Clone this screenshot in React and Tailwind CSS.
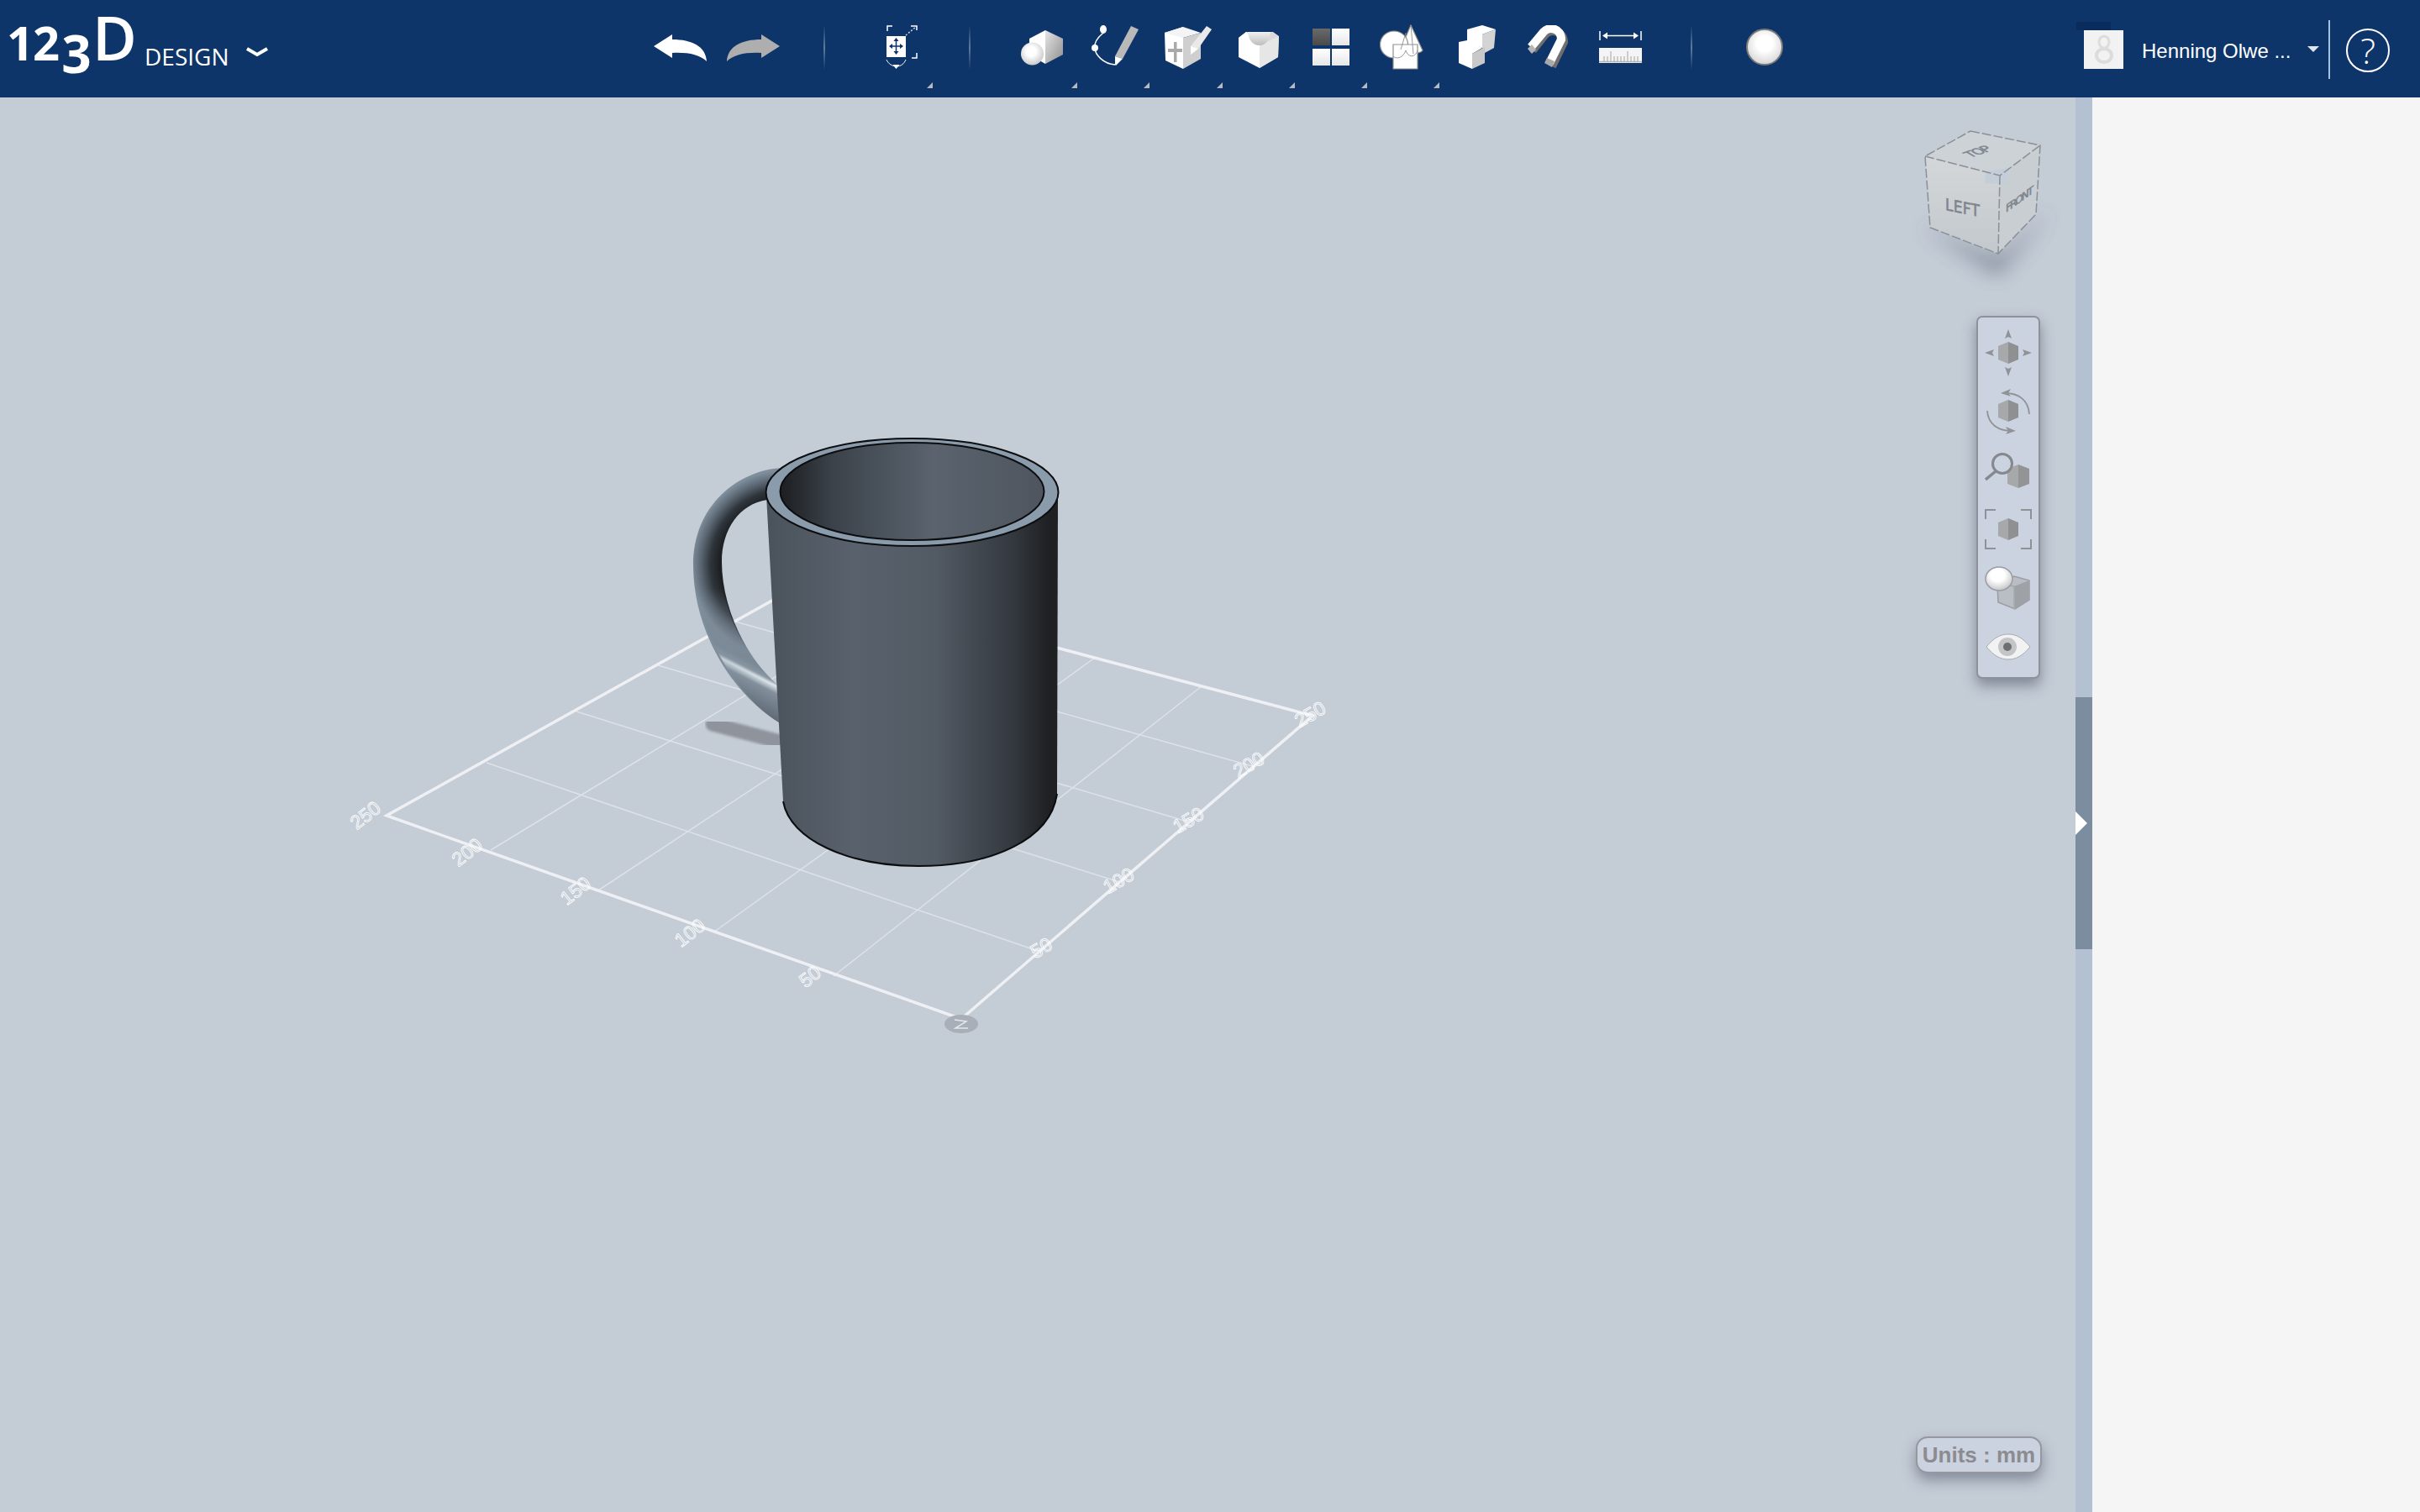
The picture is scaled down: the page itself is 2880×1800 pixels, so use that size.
import { useId } from 'react';

const OPEN = "font-['Open_Sans',sans-serif]";
const ARIAL = "font-['Liberation_Sans',Arial,sans-serif]";

// --- top bar icons ---

function Arrow({ fill, flip }) {
  return (
    <svg width="63" height="32" viewBox="0 0 63 32" className={flip ? '-scale-x-100' : ''}>
      <path d="M0 14 L22 0 V6 C45 6 62 14 63 32 C55 24 40 21 22 22 V28 Z" fill={fill} />
    </svg>
  );
}

function FitIcon() {
  return (
    <svg width="38" height="52" viewBox="0 0 38 52" fill="none">
      <path d="M2 7V1H8M30 1H37V6M37 33V39H31" stroke="#fff" strokeWidth="1.5" />
      <path d="M24 12L36 2" stroke="#cfd6e0" strokeWidth="1.5" strokeDasharray="2 2" />
      <rect x="1" y="13" width="23" height="25" fill="#fff" />
      <path d="M12.500 16v16M5 25h15" stroke="#0e3569" strokeWidth="1.500" />
      <path d="M12.500 15l-3 4h6zM12.500 35l-3-4h6zM4 25l4-3v6zM21 25l-4-3v6z" fill="#0e3569" />
      <path d="M1 41c2 5 7 8 12 8s9-3 11-8" stroke="#fff" strokeWidth="1" />
      <path d="M12.500 52l-4-5h8z" fill="#fff" />
    </svg>
  );
}

function PrimitiveIcon({ id }) {
  return (
    <svg width="50" height="42" viewBox="0 0 50 42">
      <defs>
        <linearGradient id={`${id}a`} x1="0" y1="0" x2="1" y2="1">
          <stop offset="0" stopColor="#e6e6e6" />
          <stop offset="1" stopColor="#8e8e8e" />
        </linearGradient>
        <radialGradient id={`${id}b`} cx="0.45" cy="0.4" r="0.7">
          <stop offset="0.3" stopColor="#fff" />
          <stop offset="1" stopColor="#bdbdbd" />
        </radialGradient>
      </defs>
      <path d="M29 0L10 10V29L29 40Z" fill="#fff" />
      <path d="M29 0L50 10V29L29 40Z" fill={`url(#${id}a)`} />
      <ellipse cx="13.500" cy="28" rx="13.500" ry="13.500" fill={`url(#${id}b)`} />
    </svg>
  );
}

function SketchIcon() {
  return (
    <svg width="58" height="49" viewBox="0 0 58 49" fill="none">
      <path d="M15 9C8 15 4 22 5 27C5 35 15 46 29 47" stroke="#fff" strokeWidth="1.500" />
      <ellipse cx="15" cy="5" rx="4" ry="5" fill="#fff" />
      <ellipse cx="5" cy="27" rx="4" ry="4" fill="#fff" />
      <path d="M29 37L48 1L57 5L38 40Z" fill="#b9b9b9" />
      <path d="M29 37L38 40L30 48L29 47Z" fill="#fff" />
    </svg>
  );
}

function ConstructIcon() {
  return (
    <svg width="56" height="53" viewBox="0 0 56 53">
      <path d="M22 2L0 9L1 42L22 52Z" fill="#fff" />
      <path d="M22 2L43 9L22 15L0 9Z" fill="#f4f4f4" />
      <path d="M22 15L43 9V40L22 52Z" fill="#cfcfcf" />
      <path d="M11 20h3.500v24H11zM4 28h17v4H4z" fill="#a9a9a9" />
      <path d="M31 25L50 1L56 5L40 28L31 35Z" fill="#e9e9e9" />
      <path d="M31 25L40 28L31 35Z" fill="#fff" />
    </svg>
  );
}

function ModifyIcon({ id }) {
  return (
    <svg width="49" height="43" viewBox="0 0 49 43">
      <defs>
        <linearGradient id={`${id}a`} x1="0" y1="0" x2="0" y2="1">
          <stop offset="0" stopColor="#f1f1f1" />
          <stop offset="1" stopColor="#bdbdbd" />
        </linearGradient>
      </defs>
      <path d="M10 0H42L49 5L48 30L26 43V16L1 7Z" fill="#dadada" />
      <path d="M1 7L10 0L26 16V43L1 30Z" fill="#fff" />
      <path d="M26 16V43L48 30L49 5Z" fill="#e6e6e6" />
      <path d="M12 0H39C38 10 33 16 26 16C18 16 13 10 12 0Z" fill={`url(#${id}a)`} />
    </svg>
  );
}

function PatternIcon() {
  return (
    <div className="grid grid-cols-[21px_21px] grid-rows-[20px_20px] gap-x-[2px] gap-y-[4px]">
      <div className="bg-gradient-to-b from-[#6a6a6a] to-[#4a4a4a]" />
      <div className="bg-gradient-to-b from-white to-[#e6e6e6]" />
      <div className="bg-gradient-to-b from-white to-[#e6e6e6]" />
      <div className="bg-gradient-to-b from-white to-[#e6e6e6]" />
    </div>
  );
}

function GroupIcon() {
  return (
    <svg width="52" height="54" viewBox="0 0 52 54" fill="#fff" stroke="#8f8f8f" strokeWidth="1.200">
      <path d="M37 1L24 31C26 36 48 36 51 31Z" />
      <ellipse cx="17" cy="24" rx="16.500" ry="16" />
      <path d="M16 24H45V53H16Z" />
      <path d="M16 38C20 42 28 40 31 31C34 40 42 40 45 31M31 10L25 30M37 1L40 35" fill="none" strokeWidth="0.900" />
    </svg>
  );
}

function CombineIcon() {
  return (
    <svg width="45" height="52" viewBox="0 0 45 52">
      <path d="M11 18V5L29 0L45 5L29 11V27L11 20Z" fill="#fff" />
      <path d="M29 11L45 5L43 27L32 33L29 27Z" fill="#d4d4d4" />
      <path d="M1 20L11 18L29 27L17 34V52L1 45Z" fill="#fff" />
      <path d="M17 34L32 26V45L17 52Z" fill="#c9c9c9" />
    </svg>
  );
}

function MagnetIcon() {
  return (
    <svg width="52" height="54" viewBox="0 0 52 54" fill="none" strokeLinejoin="miter">
      <path d="M7 30L22 11C28 4 44 6 44 20L30 49" stroke="#6f6f6f" strokeWidth="10" />
      <path d="M5 26L20 8C26 1 41 3 41 17L27 45" stroke="#fff" strokeWidth="10" />
      <path d="M6 23L1 28L6 34L11 29Z" fill="#b5b5b5" />
      <path d="M24 39L21 45L30 50L33 43Z" fill="#a9a9a9" />
    </svg>
  );
}

function MeasureIcon() {
  const ticks = [6, 10, 14, 18, 22, 26, 30, 34, 38, 42, 46];
  return (
    <svg width="51" height="38" viewBox="0 0 51 38">
      <path d="M1 0V11M50 0V11M6 5.500H45" stroke="#fff" strokeWidth="1.500" />
      <path d="M4 5.500L10 1.500V9.500ZM47 5.500L41 1.500V9.500Z" fill="#fff" />
      <rect x="0" y="20" width="51" height="18" fill="#f4f4f4" />
      <path d="M0 36.500H51" stroke="#b5b5b5" strokeWidth="1.500" />
      {ticks.map((x, i) => (
        <path key={x} d={`M${x} ${i % 5 === 2 ? 24 : 30}V36`} stroke="#a3a3a3" strokeWidth="1" />
      ))}
    </svg>
  );
}

function Caret({ className }) {
  return (
    <svg width="7" height="7" viewBox="0 0 7 7" className={`absolute top-[98px] ${className}`}>
      <path d="M7 0V7H0Z" fill="#b7bac0" />
    </svg>
  );
}

function Sep({ className }) {
  return <div className={`mt-[30px] h-[53px] w-[2px] shrink-0 bg-gradient-to-b from-transparent via-[#5f7c9c] to-transparent ${className}`} />;
}

// --- view tools on the right ---

function Hex({ x, y, s = 1 }) {
  return (
    <g transform={`translate(${x} ${y}) scale(${s})`}>
      <path d="M0-13L-12-8V8L0 13Z" fill="#a6a8aa" />
      <path d="M0-13L12-8V8L0 13Z" fill="#8e9092" />
    </g>
  );
}

function NavPan() {
  return (
    <svg width="56" height="58" viewBox="-28 -29 56 58" fill="#8f9296">
      <Hex x={0} y={0} />
      <path d="M0-28L-4-17L0-19L4-17ZM0 28L-4 17L0 19L4 17ZM-28 0L-17-4L-19 0L-17 4ZM28 0L17-4L19 0L17 4Z" />
    </svg>
  );
}

function NavOrbit() {
  return (
    <svg width="56" height="56" viewBox="-28 -28 56 56" fill="none">
      <Hex x={0} y={-1} />
      <path d="M25 3C24-14 12-22-4-22" stroke="#8f9296" strokeWidth="1.800" />
      <path d="M-25-1C-24 15-12 23 4 23" stroke="#8f9296" strokeWidth="1.800" />
      <path d="M-9-22L3-27L0-22L3-18ZM9 23L-3 18L0 23L-3 27Z" fill="#8f9296" />
    </svg>
  );
}

function NavZoom() {
  return (
    <svg width="56" height="44" viewBox="0 0 56 44" fill="none">
      <g transform="translate(40 29)">
        <path d="M0-14L-13-9V9L0 14Z" fill="#a6a8aa" />
        <path d="M0-14L13-9V9L0 14Z" fill="#929496" />
      </g>
      <circle cx="21" cy="14" r="11.500" fill="#cbd3e0" stroke="#85888c" strokeWidth="3" />
      <path d="M13 23L1 33" stroke="#85888c" strokeWidth="3.500" />
    </svg>
  );
}

function NavFit() {
  return (
    <svg width="56" height="48" viewBox="-28 -24 56 48" fill="none">
      <Hex x={0} y={0} s={1} />
      <path d="M-27-12V-23H-15M15-23H27V-12M27 12V23H15M-15 23H-27V12" stroke="#8f9296" strokeWidth="2" />
    </svg>
  );
}

function NavStyle({ id }) {
  return (
    <svg width="56" height="52" viewBox="0 0 56 52">
      <defs>
        <radialGradient id={`${id}s`} cx="0.45" cy="0.35" r="0.75">
          <stop offset="0.35" stopColor="#fff" />
          <stop offset="1" stopColor="#b4b6b9" />
        </radialGradient>
      </defs>
      <path d="M15 21L35 12L53 17V40L36 51L16 43Z" fill="#b9bec4" stroke="#9a9da1" strokeWidth="1.500" />
      <path d="M35 24L53 17V40L36 51Z" fill="#9ea2a6" />
      <path d="M15 21L35 24V51" fill="none" stroke="#a5a8ac" strokeWidth="1.500" />
      <ellipse cx="17" cy="15" rx="16" ry="14" fill={`url(#${id}s)`} stroke="#9a9da1" strokeWidth="1.500" />
    </svg>
  );
}

function NavEye() {
  return (
    <svg width="54" height="32" viewBox="0 0 54 32">
      <path d="M1 16C10 5 18 1 27 1C36 1 44 5 53 16C44 27 36 31 27 31C18 31 10 27 1 16Z" fill="#f2f2f2" stroke="#a9abae" strokeWidth="1" />
      <circle cx="26" cy="16" r="11" fill="#c4c5c7" />
      <circle cx="26" cy="16" r="5" fill="#6e6f71" />
    </svg>
  );
}

// --- the 3D scene, drawn in screen coordinates of the full page ---

const LB = [[460, 971], [584, 1012], [712, 1060], [849, 1110], [992, 1162], [1144, 1213]];
const TR = [[960, 692], [1064, 720], [1181, 751], [1303, 783], [1430, 817], [1562, 852]];
const LT = [[460, 971], [579, 908], [686, 847], [783, 792], [875, 740], [960, 692]];
const BR = [[1144, 1213], [1238, 1133], [1332, 1050], [1413, 978], [1490, 912], [1562, 852]];

const AXIS_LABELS = [
  ['250', 436, 972, -38], ['200', 557, 1016, -38], ['150', 686, 1062, -38], ['100', 822, 1112, -38], ['50', 965, 1164, -38],
  ['50', 1240, 1130, -30], ['100', 1332, 1050, -30], ['150', 1415, 978, -30], ['200', 1487, 912, -30], ['250', 1560, 852, -30],
];

function Grid() {
  return (
    <g>
      {LB.slice(1, 5).map((p, i) => (
        <line key={`a${i}`} x1={p[0]} y1={p[1]} x2={TR[i + 1][0]} y2={TR[i + 1][1]} stroke="#dde2e8" strokeWidth="1.500" />
      ))}
      {LT.slice(1, 5).map((p, i) => (
        <line key={`b${i}`} x1={p[0]} y1={p[1]} x2={BR[i + 1][0]} y2={BR[i + 1][1]} stroke="#dde2e8" strokeWidth="1.500" />
      ))}
      <path d="M960 692L460 971L1144 1213L1562 852Z" fill="none" stroke="#eef0f3" strokeWidth="3.500" />
      {AXIS_LABELS.map(([t, x, y, r], i) => (
        <text
          key={i}
          transform={`translate(${x} ${y}) rotate(${r})`}
          textAnchor="middle"
          dominantBaseline="middle"
          fontFamily="Liberation Sans, sans-serif"
          fontSize="23"
          fill="none"
          stroke="#fff"
          strokeWidth="0.800"
        >
          {t}
        </text>
      ))}
      <ellipse cx="1144" cy="1219" rx="20" ry="11" fill="#a9afb8" />
      <path d="M1136 1214L1150 1216L1137 1224L1152 1224" fill="none" stroke="#e4e7ea" strokeWidth="1.500" />
    </g>
  );
}

function Mug() {
  return (
    <g>
      <defs>
        <linearGradient id="body" gradientUnits="userSpaceOnUse" x1="912" y1="0" x2="1259" y2="0">
          <stop offset="0" stopColor="#4a525c" />
          <stop offset="0.3" stopColor="#59626c" />
          <stop offset="0.58" stopColor="#525a64" />
          <stop offset="0.85" stopColor="#33383e" />
          <stop offset="0.97" stopColor="#1e2022" />
          <stop offset="1" stopColor="#1e2022" />
        </linearGradient>
        <linearGradient id="inner" gradientUnits="userSpaceOnUse" x1="928" y1="0" x2="1243" y2="0">
          <stop offset="0" stopColor="#1c1e20" />
          <stop offset="0.2" stopColor="#3b424a" />
          <stop offset="0.58" stopColor="#5a636e" />
          <stop offset="1" stopColor="#4e555e" />
        </linearGradient>
        <radialGradient id="handle" gradientUnits="userSpaceOnUse" cx="935" cy="672" r="112">
          <stop offset="0.7" stopColor="#1c2024" />
          <stop offset="0.8" stopColor="#2f353b" />
          <stop offset="0.9" stopColor="#596571" />
          <stop offset="1" stopColor="#7f8e9c" />
        </radialGradient>
        <linearGradient id="handleLow" gradientUnits="userSpaceOnUse" x1="865" y1="830" x2="888" y2="785">
          <stop offset="0" stopColor="#5d6873" />
          <stop offset="0.6" stopColor="#83909c" />
          <stop offset="0.76" stopColor="#dfe7ee" />
          <stop offset="0.84" stopColor="#8a97a3" />
          <stop offset="1" stopColor="#7a8793" />
        </linearGradient>
        <linearGradient id="lowFade" gradientUnits="userSpaceOnUse" x1="0" y1="700" x2="0" y2="815">
          <stop offset="0" stopColor="#000" />
          <stop offset="1" stopColor="#fff" />
        </linearGradient>
        <mask id="lowMask" maskUnits="userSpaceOnUse" x="800" y="680" width="160" height="200">
          <rect x="800" y="680" width="160" height="200" fill="url(#lowFade)" />
        </mask>
        <filter id="soft"><feGaussianBlur stdDeviation="1.500" /></filter>
      </defs>

      <path d="M848 862L932 884" stroke="#8e939c" strokeWidth="17" strokeLinecap="round" filter="url(#soft)" />

      <path d="M930 557C880 560 825 600 825 673C825 750 870 825 927 860L925 815C885 780 859 720 859 669C859 630 880 600 913 595Z" fill="url(#handle)" />
      <path d="M828 700C840 770 885 835 927 860L925 815C890 785 870 745 860 700Z" fill="url(#handleLow)" mask="url(#lowMask)" />

      <path d="M912 590L932 954C940 1000 1010 1031 1093 1031C1180 1031 1250 1000 1258 945L1259 590Z" fill="url(#body)" />
      <path d="M932 954C940 1000 1010 1031 1093 1031C1180 1031 1250 1000 1258 945" fill="none" stroke="#0c0d0e" strokeWidth="2" />

      <ellipse cx="1085.500" cy="586" rx="174" ry="64" fill="#8a9bac" stroke="#0c0d0e" strokeWidth="2" />
      <ellipse cx="1085.500" cy="585" rx="157" ry="58" fill="url(#inner)" stroke="#0c0d0e" strokeWidth="2" />
    </g>
  );
}

function ViewCube() {
  return (
    <g>
      <defs>
        <filter id="cubeShadow" x="-40%" y="-80%" width="180%" height="260%"><feGaussianBlur stdDeviation="12" /></filter>
        <linearGradient id="cubeLeft" x1="0" y1="0" x2="0" y2="1">
          <stop offset="0" stopColor="#d3d7da" />
          <stop offset="1" stopColor="#c3c8cc" />
        </linearGradient>
      </defs>
      <path d="M2285 268L2378 310L2440 250L2378 326Z" fill="#4f5c6c" opacity="0.75" filter="url(#cubeShadow)" />
      <path d="M2345 156L2428 173L2380 209L2291 186Z" fill="#cdd2d7" />
      <path d="M2291 186L2380 209L2378 302L2297 271Z" fill="url(#cubeLeft)" />
      <path d="M2380 209L2428 173L2423 255L2378 302Z" fill="#c9ced3" />
      <path d="M2363 204L2390 200L2389 220L2362 218Z" fill="#c4ced9" />
      <g fill="none" stroke="#8a9097" strokeWidth="1.500" strokeDasharray="11 3">
        <path d="M2345 156L2428 173L2423 255L2378 302L2297 271L2291 186Z" />
        <path d="M2291 186L2380 209L2428 173M2380 209L2378 302" />
      </g>
      <g fontFamily="DejaVu Sans, sans-serif" fontWeight="400" fill="#7f868e" stroke="#7f868e" strokeWidth="0.600">
        <text transform="matrix(1 0.2 0 1.150 2315 250)" fontSize="17" textLength="41" lengthAdjust="spacing">LEFT</text>
        <text transform="matrix(1 -0.72 0 1 2387 253)" fontSize="12" textLength="33" lengthAdjust="spacing">FRONT</text>
        <text transform="matrix(0.85 -0.3 0.75 0.45 2345 188)" fontSize="18" textLength="32" lengthAdjust="spacing">TOP</text>
      </g>
    </g>
  );
}

export default function App() {
  const id = useId().replace(/:/g, '');

  return (
    <div className={`flex h-[1800px] w-[2880px] flex-col overflow-hidden ${ARIAL}`}>
      {/* Barra superior */}
      <header className="flex h-[116px] shrink-0 items-start bg-[#0e3569] text-white">
        <div className={`ml-[8px] mt-[8px] flex w-[154px] items-baseline leading-none font-bold ${OPEN}`}>
          <span className="w-[30px] text-center text-[56px]">1</span>
          <span className="w-[34px] text-center text-[56px]">2</span>
          <span className="w-[38px] translate-y-[15px] text-center text-[62px]">3</span>
          <span className="w-[52px] text-[72px] leading-none font-semibold">D</span>
        </div>
        <span className={`ml-[10px] mt-[48px] w-[102px] text-[28px] leading-[38px] whitespace-nowrap ${OPEN}`}>DESIGN</span>
        <svg width="28" height="12" viewBox="0 0 28 12" className="ml-[18px] mt-[56px]">
          <path d="M2 2L14 9L26 2" fill="none" stroke="#fff" strokeWidth="4" />
        </svg>

        <div className="ml-[458px] mt-[41px]"><Arrow fill="#fff" /></div>
        <div className="ml-[24px] mt-[41px]"><Arrow fill="#aeaeae" flip /></div>
        <Sep className="ml-[52px]" />

        <div className="relative ml-[72px] mt-[30px]">
          <FitIcon />
          <Caret className="left-[49px] -mt-[30px]" />
        </div>
        <Sep className="ml-[61px]" />

        <div className="relative ml-[60px] mt-[36px]">
          <PrimitiveIcon id={`${id}p`} />
          <Caret className="left-[60px] -mt-[36px]" />
        </div>
        <div className="relative ml-[33px] mt-[30px]">
          <SketchIcon />
          <Caret className="left-[63px] -mt-[30px]" />
        </div>
        <div className="relative ml-[30px] mt-[30px]">
          <ConstructIcon />
          <Caret className="left-[62px] -mt-[30px]" />
        </div>
        <div className="relative ml-[31px] mt-[38px]">
          <ModifyIcon id={`${id}m`} />
          <Caret className="left-[61px] -mt-[38px]" />
        </div>
        <div className="relative ml-[40px] mt-[34px] w-[44px]">
          <PatternIcon />
          <Caret className="left-[58px] -mt-[34px]" />
        </div>
        <div className="relative ml-[36px] mt-[29px]">
          <GroupIcon />
          <Caret className="left-[64px] -mt-[29px]" />
        </div>
        <div className="ml-[41px] mt-[30px]"><CombineIcon /></div>
        <div className="ml-[37px] mt-[30px]"><MagnetIcon /></div>
        <div className="ml-[34px] mt-[37px]"><MeasureIcon /></div>
        <Sep className="ml-[58px]" />

        <div className="ml-[64px] mt-[34px] h-[44px] w-[44px] rounded-full border-2 border-[#7c7c7c] bg-[radial-gradient(circle_at_50%_40%,#ffffff_30%,#c6c6c6_100%)]" />

        {/* Usuário */}
        <div className="relative ml-[358px] mt-[36px] h-[46px] w-[47px] bg-[#f2f2f2]">
          <div className="absolute -left-[9px] -top-[10px] h-[10px] w-[41px] bg-[#0a2c5c]" />
          <svg width="47" height="46" viewBox="0 0 47 46" className="block">
            <ellipse cx="24" cy="14" rx="6" ry="7" fill="none" stroke="#dcdcdc" strokeWidth="3" />
            <ellipse cx="24" cy="30" rx="9" ry="8" fill="none" stroke="#dcdcdc" strokeWidth="4" />
          </svg>
        </div>
        <span className="ml-[22px] mt-[46px] w-[175px] text-[24px] leading-[30px] whitespace-nowrap">Henning Olwe ...</span>
        <svg width="14" height="7" viewBox="0 0 14 7" className="ml-[22px] mt-[55px]">
          <path d="M0 0H14L7 7Z" fill="#dfe6ee" />
        </svg>
        <div className="ml-[11px] mt-[24px] h-[70px] w-[2px] bg-[#a4c3d9]" />
        <div className={`ml-[19px] mt-[34px] flex h-[52px] w-[52px] items-center justify-center rounded-full border-2 border-white text-[42px] leading-none font-light ${OPEN}`}>?</div>
      </header>

      <div className="flex min-h-0 flex-1">
        {/* Área de trabalho */}
        <main className="relative min-w-0 flex-1 overflow-hidden bg-[#c4ccd6]">
          <svg width="2470" height="1684" viewBox="0 116 2470 1684" className="absolute inset-0">
            <Grid />
            <Mug />
            <ViewCube />
          </svg>

          <div className="absolute right-[42px] top-[260px] flex h-[432px] w-[76px] flex-col items-center rounded-[7px] border-2 border-[#8e939b] bg-[#cbd3e0] pt-[7px] shadow-[0_8px_16px_rgba(70,80,95,0.55)]">
            <div className="flex h-[70px] items-center"><NavPan /></div>
            <div className="flex h-[70px] items-center"><NavOrbit /></div>
            <div className="flex h-[70px] items-center"><NavZoom /></div>
            <div className="flex h-[70px] items-center"><NavFit /></div>
            <div className="flex h-[70px] items-center"><NavStyle id={`${id}n`} /></div>
            <div className="flex h-[70px] items-center"><NavEye /></div>
          </div>

          <div className="absolute bottom-[46px] right-[40px] flex h-[44px] w-[150px] items-center justify-center rounded-[14px] border-2 border-[#95989e] bg-[#cbd3e0] text-[26px] font-bold text-[#8c8c90] shadow-[0_8px_16px_rgba(70,80,95,0.5)]">
            Units : mm
          </div>
        </main>

        {/* Divisor recolhível */}
        <div className="flex w-[20px] shrink-0 flex-col bg-[#b3c1d3]">
          <div className="h-[714px]" />
          <div className="flex h-[300px] items-center bg-[#7b8d9f]">
            <svg width="14" height="28" viewBox="0 0 14 28"><path d="M0 0L14 14L0 28Z" fill="#fff" /></svg>
          </div>
        </div>

        <aside className="w-[390px] shrink-0 bg-[#f5f5f5]" />
      </div>
    </div>
  );
}
